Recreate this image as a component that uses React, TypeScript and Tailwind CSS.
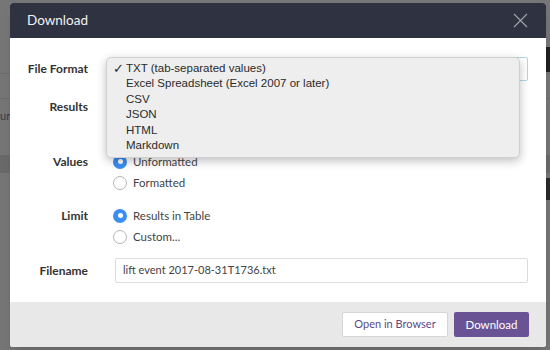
const formats = [
  "TXT (tab-separated values)",
  "Excel Spreadsheet (Excel 2007 or later)",
  "CSV",
  "JSON",
  "HTML",
  "Markdown",
]

function Radio({ label, checked }: { label: string; checked?: boolean }) {
  return (
    <div className="flex h-[21px] items-center">
      {checked ? (
        <span className="flex h-[14px] w-[14px] items-center justify-center rounded-full bg-[#3b8ef3]">
          <span className="h-[5px] w-[5px] rounded-full bg-white" />
        </span>
      ) : (
        <span className="h-[14px] w-[14px] rounded-full border border-[#b5b5b5] bg-white" />
      )}
      <span className="ml-[6px] text-[11.5px] text-[#444]">{label}</span>
    </div>
  )
}

function Row({ label, className, children }: { label: string; className?: string; children: React.ReactNode }) {
  return (
    <div className={`flex ${className ?? ""}`}>
      <div className="flex h-[21px] w-[78px] shrink-0 items-center justify-end text-[12px] font-bold text-[#333]">
        {label}
      </div>
      <div className="ml-[25px] flex-1">{children}</div>
    </div>
  )
}

export default function App() {
  return (
    <div className="relative h-[350px] w-[550px] overflow-hidden bg-[#767676] font-['Lato',sans-serif]">
      {/* page behind the overlay */}
      <div className="flex h-full flex-col">
        <div className="mt-[73px] h-px bg-[#6c6c6c]" />
        <div className="mt-[24px] h-px bg-[#6c6c6c]" />
        <div className="mt-[10px] flex h-[14px] items-center">
          <span className="text-[11px] text-[#3a3a4a]">ure</span>
        </div>
        <div className="mt-[32px] h-[18px] bg-[#6a6a6a]" />
      </div>
      <div className="absolute right-0 top-[47px] h-[25px] w-[6px] bg-[#1f1f1f]" />
      <div className="absolute right-0 top-[178px] h-[22px] w-[6px] bg-[#2a2a2a]" />

      {/* modal */}
      <div className="absolute left-[10px] top-[3px] flex w-[536px] flex-col overflow-hidden rounded-[3px] bg-white shadow-lg">
        <div className="flex h-[35px] items-center justify-between bg-[#2f3241] pl-[17px] pr-[18px]">
          <span className="text-[13.5px] text-[#f2f2f2]">Download</span>
          <svg width="15" height="15" viewBox="0 0 15 15" fill="none" stroke="#a2a4ac" strokeWidth="1.1">
            <path d="M1 1 L14 14 M14 1 L1 14" />
          </svg>
        </div>

        <div className="flex flex-col pb-[19px] pr-[18px] pt-[19px]">
          <Row label="File Format" className="items-center">
            <div className="relative">
              <div className="h-[24px] rounded-[2px] border border-[#a9d9e6]" />
              <div className="absolute left-[-7px] top-0 z-10 w-[414px] rounded-[5px] border border-[#cfcfcf] bg-[#eeeeee] pb-[4px] pt-[3px] font-['Liberation_Sans',sans-serif] text-[11.5px] text-[#2a2a2a] shadow-[0_3px_10px_rgba(0,0,0,0.25)]">
                {formats.map((f, i) => (
                  <div key={f} className="flex h-[15.4px] items-center">
                    <span className="w-[19px] pl-[6px] text-[13px] leading-none">{i === 0 ? "✓" : ""}</span>
                    <span>{f}</span>
                  </div>
                ))}
              </div>
            </div>
          </Row>
          <Row label="Results" className="mt-[15px]">
            <div className="h-[42px]" />
          </Row>
          <Row label="Values" className="mt-[13px]">
            <Radio label="Unformatted" checked />
            <Radio label="Formatted" />
          </Row>
          <Row label="Limit" className="mt-[12px]">
            <Radio label="Results in Table" checked />
            <Radio label="Custom..." />
          </Row>
          <Row label="Filename" className="mt-[11px] items-center">
            <div className="ml-[2px] flex h-[25px] items-center rounded-[2px] border border-[#dcdcdc] px-[7px] text-[11px] text-[#444]">
              lift event 2017-08-31T1736.txt
            </div>
          </Row>
        </div>

        <div className="flex h-[45px] items-center justify-end gap-[6px] bg-[#e8e8e8] pr-[17px]">
          <button className="h-[25px] w-[106px] rounded-[2px] border border-[#d6d6d6] bg-white text-[11px] text-[#5b4b8a]">
            Open in Browser
          </button>
          <button className="h-[25px] w-[75px] rounded-[2px] bg-[#6a5395] text-[11.5px] text-white">
            Download
          </button>
        </div>
      </div>
    </div>
  )
}
